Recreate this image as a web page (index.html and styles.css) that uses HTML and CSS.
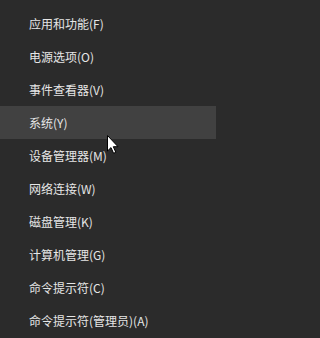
FILE: index.html
```html
<!DOCTYPE html>
<html lang="zh-CN">
<head>
<meta charset="utf-8">
<link rel="stylesheet" href="styles.css">
</head>
<body>
<ul class="menu">
  <li class="item">应用和功能(F)</li>
  <li class="item">电源选项(O)</li>
  <li class="item">事件查看器(V)</li>
  <li class="item hover">系统(Y)</li>
  <li class="item">设备管理器(M)</li>
  <li class="item">网络连接(W)</li>
  <li class="item">磁盘管理(K)</li>
  <li class="item">计算机管理(G)</li>
  <li class="item">命令提示符(C)</li>
  <li class="item">命令提示符(管理员)(A)</li>
</ul>
<svg class="cursor" width="12" height="19" viewBox="0 0 12 19">
  <path d="M0.5 0.5 L0.5 16 L4 12.6 L6.6 18.3 L8.8 17.3 L6.3 11.7 L11 11.7 Z" fill="#fff" stroke="#000" stroke-width="1"/>
</svg>
</body>
</html>
```
FILE: styles.css
```css
html, body {
  margin: 0;
  padding: 0;
  background: #2b2b2b;
  width: 216px;
  height: 338px;
  overflow: hidden;
}
.menu {
  list-style: none;
  margin: 0;
  padding: 7px 0 0 0;
}
.item {
  height: 33px;
  line-height: 33px;
  padding-left: 29px;
  color: #e6e6e6;
  font-family: "Noto Sans CJK SC", "Noto Sans", sans-serif;
  font-size: 12px;
  white-space: nowrap;
}
.item.hover {
  background: #414141;
}
.cursor {
  position: absolute;
  left: 107px;
  top: 135px;
}
```
